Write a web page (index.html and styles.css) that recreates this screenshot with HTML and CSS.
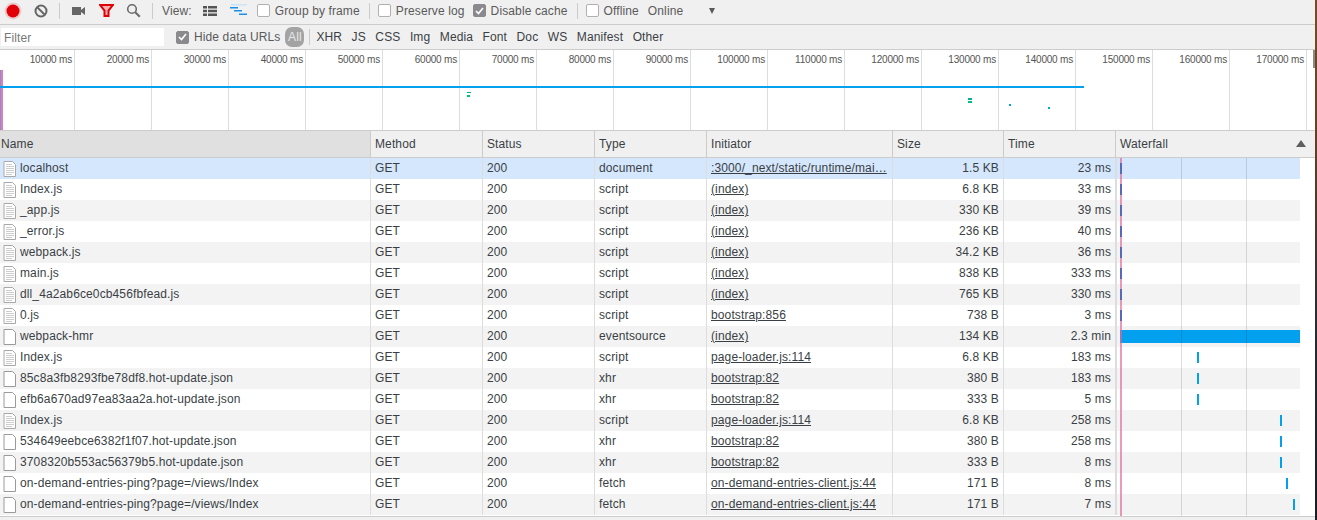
FILE: index.html
```html
<!DOCTYPE html>
<html lang="en">
<head>
<meta charset="utf-8">
<title>Network</title>
<link rel="stylesheet" href="styles.css">
</head>
<body>
<svg class="defs" aria-hidden="true">
  <symbol id="doc" viewBox="0 0 13 16"><path d="M1 .5h8.500l3 3v12h-11.500z" fill="#fff" stroke="#a8a8a8"/><path d="M3 3.500h6M3 5.500h8M3 7.500h8M3 9.500h8M3 11.500h8M3 13.500h6" stroke="#cdcdcd"/></symbol>
  <symbol id="blank" viewBox="0 0 13 16"><path d="M1 .5h8.500l3 3v12h-11.500z" fill="#fff" stroke="#9a9a9a"/></symbol>
</svg>
<div class="panel">
  <div class="toolbar">
    <svg class="ico rec" width="20" height="20" viewBox="0 0 20 20"><circle cx="10" cy="10" r="8.500" fill="#e8a0a0" opacity=".45"/><circle cx="10" cy="10" r="6.500" fill="#e00008"/></svg>
    <svg class="ico clear" width="16" height="16" viewBox="0 0 16 16"><circle cx="8" cy="8" r="5.500" fill="none" stroke="#666" stroke-width="2"/><path d="M4 4l8 8" stroke="#666" stroke-width="2"/></svg>
    <span class="sep sep-a"></span>
    <svg class="ico cam" width="13" height="8" viewBox="0 0 13 8"><path d="M0 0h9v8H0zM9 3l4-3v8L9 5z" fill="#666"/></svg>
    <svg class="ico funnel" width="15" height="13" viewBox="0 0 15 13"><path d="M1 1h13L9.500 6.500V12h-4V6.500z" fill="#f4b0b0" stroke="#e00008" stroke-width="2"/></svg>
    <svg class="ico search" width="15" height="15" viewBox="0 0 15 15"><circle cx="6" cy="6" r="4.300" fill="none" stroke="#6a6a6a" stroke-width="1.600"/><path d="M9.300 9.300l4.500 4.500" stroke="#6a6a6a" stroke-width="2"/></svg>
    <span class="sep sep-b"></span>
    <span class="label view-label">View:</span>
    <svg class="ico list" width="14" height="10" viewBox="0 0 14 10"><path d="M0 0h4v2.500H0zM5 0h9v2.500H5zM0 3.700h4v2.500H0zM5 3.700h9v2.500H5zM0 7.400h4V10H0zM5 7.400h9V10H5z" fill="#555"/></svg>
    <svg class="ico wf" width="17" height="12" viewBox="0 0 17 12"><path d="M1 0h16v1.500H1z" fill="#cfe3f8"/><path d="M0 3h8v1.500H0zM4 6h8v1.500H4zM9 9.500h8V11H9z" fill="#1a8fe8"/></svg>
    <label class="check check-group"><span class="box"></span>Group by frame</label>
    <span class="sep sep-c"></span>
    <label class="check check-log"><span class="box"></span>Preserve log</label>
    <label class="check check-cache"><span class="box on"><svg width="9" height="8" viewBox="0 0 9 8"><path d="M1 4l2.500 2.500L8 1" fill="none" stroke="#fff" stroke-width="1.600"/></svg></span>Disable cache</label>
    <span class="sep sep-d"></span>
    <label class="check check-offline"><span class="box"></span>Offline</label>
    <span class="label online">Online</span>
    <span class="caret"></span>
  </div>
  <div class="filterbar">
    <div class="filter-input">Filter</div>
    <label class="check check-hide"><span class="box on"><svg width="9" height="8" viewBox="0 0 9 8"><path d="M1 4l2.500 2.500L8 1" fill="none" stroke="#fff" stroke-width="1.600"/></svg></span>Hide data URLs</label>
    <span class="pill">All</span>
    <span class="sep sep-e"></span>
    <div class="types">
      <span>XHR</span><span>JS</span><span>CSS</span><span>Img</span><span>Media</span><span>Font</span><span>Doc</span><span>WS</span><span>Manifest</span><span>Other</span>
    </div>
  </div>
  <div class="overview">
    <div class="ticks">
      <div>10000 ms</div><div>20000 ms</div><div>30000 ms</div><div>40000 ms</div><div>50000 ms</div><div>60000 ms</div><div>70000 ms</div><div>80000 ms</div><div>90000 ms</div><div>100000 ms</div><div>110000 ms</div><div>120000 ms</div><div>130000 ms</div><div>140000 ms</div><div>150000 ms</div><div>160000 ms</div><div>170000 ms</div>
    </div>
    <i class="ov ov-blue"></i><i class="ov ov-pink"></i><i class="ov ov-line"></i>
    <i class="ov ov-g1"></i><i class="ov ov-g2"></i><i class="ov ov-g3"></i><i class="ov ov-g4"></i>
    <i class="ov ov-d1"></i><i class="ov ov-d2"></i>
    <i class="ov ov-thumb"></i>
  </div>
  <div class="grid head">
    <div class="c name-head">Name</div><div class="c">Method</div><div class="c">Status</div><div class="c">Type</div><div class="c">Initiator</div><div class="c">Size</div><div class="c">Time</div><div class="c wf-head">Waterfall<span class="sort"></span></div>
  </div>
  <div class="body">
    <div class="grid row selected"><div class="c n"><svg class="fi"><use href="#doc"/></svg>localhost</div><div class="c">GET</div><div class="c">200</div><div class="c">document</div><div class="c"><a>:3000/_next/static/runtime/mai…</a></div><div class="c r">1.5 KB</div><div class="c r">23 ms</div><div class="c w"><i class="load"></i></div></div>
    <div class="grid row"><div class="c n"><svg class="fi"><use href="#doc"/></svg>Index.js</div><div class="c">GET</div><div class="c">200</div><div class="c">script</div><div class="c"><a>(index)</a></div><div class="c r">6.8 KB</div><div class="c r">33 ms</div><div class="c w"><i class="load"></i></div></div>
    <div class="grid row"><div class="c n"><svg class="fi"><use href="#doc"/></svg>_app.js</div><div class="c">GET</div><div class="c">200</div><div class="c">script</div><div class="c"><a>(index)</a></div><div class="c r">330 KB</div><div class="c r">39 ms</div><div class="c w"><i class="load"></i></div></div>
    <div class="grid row"><div class="c n"><svg class="fi"><use href="#doc"/></svg>_error.js</div><div class="c">GET</div><div class="c">200</div><div class="c">script</div><div class="c"><a>(index)</a></div><div class="c r">236 KB</div><div class="c r">40 ms</div><div class="c w"><i class="load"></i></div></div>
    <div class="grid row"><div class="c n"><svg class="fi"><use href="#doc"/></svg>webpack.js</div><div class="c">GET</div><div class="c">200</div><div class="c">script</div><div class="c"><a>(index)</a></div><div class="c r">34.2 KB</div><div class="c r">36 ms</div><div class="c w"><i class="load"></i></div></div>
    <div class="grid row"><div class="c n"><svg class="fi"><use href="#doc"/></svg>main.js</div><div class="c">GET</div><div class="c">200</div><div class="c">script</div><div class="c"><a>(index)</a></div><div class="c r">838 KB</div><div class="c r">333 ms</div><div class="c w"><i class="load"></i></div></div>
    <div class="grid row"><div class="c n"><svg class="fi"><use href="#doc"/></svg>dll_4a2ab6ce0cb456fbfead.js</div><div class="c">GET</div><div class="c">200</div><div class="c">script</div><div class="c"><a>(index)</a></div><div class="c r">765 KB</div><div class="c r">330 ms</div><div class="c w"><i class="load"></i></div></div>
    <div class="grid row"><div class="c n"><svg class="fi"><use href="#doc"/></svg>0.js</div><div class="c">GET</div><div class="c">200</div><div class="c">script</div><div class="c"><a>bootstrap:856</a></div><div class="c r">738 B</div><div class="c r">3 ms</div><div class="c w"><i class="load"></i></div></div>
    <div class="grid row"><div class="c n"><svg class="fi"><use href="#blank"/></svg>webpack-hmr</div><div class="c">GET</div><div class="c">200</div><div class="c">eventsource</div><div class="c"><a>(index)</a></div><div class="c r">134 KB</div><div class="c r">2.3 min</div><div class="c w"><i class="long"></i></div></div>
    <div class="grid row"><div class="c n"><svg class="fi"><use href="#doc"/></svg>Index.js</div><div class="c">GET</div><div class="c">200</div><div class="c">script</div><div class="c"><a>page-loader.js:114</a></div><div class="c r">6.8 KB</div><div class="c r">183 ms</div><div class="c w"><i class="tick" style="left:80px"></i></div></div>
    <div class="grid row"><div class="c n"><svg class="fi"><use href="#blank"/></svg>85c8a3fb8293fbe78df8.hot-update.json</div><div class="c">GET</div><div class="c">200</div><div class="c">xhr</div><div class="c"><a>bootstrap:82</a></div><div class="c r">380 B</div><div class="c r">183 ms</div><div class="c w"><i class="tick" style="left:80px"></i></div></div>
    <div class="grid row"><div class="c n"><svg class="fi"><use href="#blank"/></svg>efb6a670ad97ea83aa2a.hot-update.json</div><div class="c">GET</div><div class="c">200</div><div class="c">xhr</div><div class="c"><a>bootstrap:82</a></div><div class="c r">333 B</div><div class="c r">5 ms</div><div class="c w"><i class="tick" style="left:80px"></i></div></div>
    <div class="grid row"><div class="c n"><svg class="fi"><use href="#doc"/></svg>Index.js</div><div class="c">GET</div><div class="c">200</div><div class="c">script</div><div class="c"><a>page-loader.js:114</a></div><div class="c r">6.8 KB</div><div class="c r">258 ms</div><div class="c w"><i class="tick" style="left:163px"></i></div></div>
    <div class="grid row"><div class="c n"><svg class="fi"><use href="#blank"/></svg>534649eebce6382f1f07.hot-update.json</div><div class="c">GET</div><div class="c">200</div><div class="c">xhr</div><div class="c"><a>bootstrap:82</a></div><div class="c r">380 B</div><div class="c r">258 ms</div><div class="c w"><i class="tick" style="left:163px"></i></div></div>
    <div class="grid row"><div class="c n"><svg class="fi"><use href="#blank"/></svg>3708320b553ac56379b5.hot-update.json</div><div class="c">GET</div><div class="c">200</div><div class="c">xhr</div><div class="c"><a>bootstrap:82</a></div><div class="c r">333 B</div><div class="c r">8 ms</div><div class="c w"><i class="tick" style="left:163px"></i></div></div>
    <div class="grid row"><div class="c n"><svg class="fi"><use href="#blank"/></svg>on-demand-entries-ping?page=/views/Index</div><div class="c">GET</div><div class="c">200</div><div class="c">fetch</div><div class="c"><a>on-demand-entries-client.js:44</a></div><div class="c r">171 B</div><div class="c r">8 ms</div><div class="c w"><i class="tick" style="left:169px"></i></div></div>
    <div class="grid row"><div class="c n"><svg class="fi"><use href="#blank"/></svg>on-demand-entries-ping?page=/views/Index</div><div class="c">GET</div><div class="c">200</div><div class="c">fetch</div><div class="c"><a>on-demand-entries-client.js:44</a></div><div class="c r">171 B</div><div class="c r">7 ms</div><div class="c w"><i class="tick" style="left:176px"></i></div></div>
    <i class="wline wline-1"></i><i class="wline wline-2"></i><i class="wline wline-pink"></i>
  </div>
  <div class="footer"></div>
</div>
<div class="edge"></div>
</body>
</html>
```
FILE: styles.css
```css
* { box-sizing: border-box; }
html, body { margin: 0; height: 520px; overflow: hidden; }
body {
  display: flex;
  font: 12px "Liberation Sans", Arial, sans-serif;
  letter-spacing: .12px;
  color: #3a3f45;
  background: #fff;
}
.defs { display: none; }
.panel { width: 1315px; height: 520px; display: flex; flex-direction: column; flex: none; }
.edge { flex: 1; background: linear-gradient(#7a4a28 0, #6b3f22 130px, #2a2a35 330px, #1c1c28 100%); }

.toolbar, .filterbar {
  display: flex;
  align-items: center;
  background: #f0f0f0;
  color: #5a5a5a;
  flex: none;
}
.toolbar { height: 25px; padding-bottom: 3px; border-bottom: 1px solid #ccc; }
.filterbar { height: 25px; border-bottom: 1px solid #ccc; }
.ico { flex: none; display: block; }
.rec { margin-left: 3px; }
.clear { margin-left: 10px; }
.sep { width: 1px; height: 16px; background: #ccc; flex: none; }
.sep-a { margin-left: 10px; }
.cam { margin-left: 12px; }
.funnel { margin-left: 14px; }
.search { margin-left: 12px; }
.sep-b { margin-left: 11px; }
.view-label { margin-left: 9px; }
.list { margin-left: 11px; }
.wf { margin-left: 13px; margin-top: -1px; }
.check { display: flex; align-items: center; flex: none; }
.box {
  width: 13px; height: 13px; border: 1px solid #b0b0b0; border-radius: 2px;
  background: #fff; margin-right: 5px; flex: none;
  display: flex; align-items: center; justify-content: center;
}
.box.on { background: #8a8a8e; border-color: #8a8a8e; }
.check-group { margin-left: 10px; }
.sep-c { margin-left: 9px; }
.check-log { margin-left: 8px; }
.check-cache { margin-left: 8px; }
.sep-d { margin-left: 9px; }
.check-offline { margin-left: 8px; }
.online { margin-left: 9px; }
.caret {
  margin-left: 26px; width: 0; height: 0;
  border-left: 3.500px solid transparent; border-right: 3.500px solid transparent;
  border-top: 6px solid #5a5a5a;
}

.filter-input {
  margin-left: 1px; width: 163px; height: 18px; background: #fff;
  color: #777; padding: 3px 3px 0; line-height: 14px;
}
.check-hide { margin-left: 12px; }
.pill {
  margin-left: 5px; width: 19px; height: 20px; border-radius: 7px;
  background: #a3a3a3; color: #e8e8e8; text-align: center; line-height: 20px;
}
.sep-e { margin-left: 5px; }
.types { display: flex; gap: 9.500px; margin-left: 6px; color: #3a3f45; }

.overview { height: 81px; flex: none; position: relative; background: #fff; border-bottom: 1px solid #ccc; overflow: hidden; }
.ticks { display: flex; height: 100%; margin-left: -2px; }
.ticks div {
  width: 77px; flex: none; text-align: right; padding: 4px 2px 0 0;
  border-right: 1px solid #ddd; color: #555; font-size: 10px; letter-spacing: -.2px; line-height: 12px;
}
.ov { position: absolute; display: block; }
.ov-blue { left: 0; top: 20px; width: 1px; height: 60px; background: #7d8ff0; }
.ov-pink { left: 1px; top: 20px; width: 2px; height: 60px; background: #f07a9a; }
.ov-line { left: 0; top: 36px; width: 1084px; height: 2px; background: #03a0ef; }
.ov-g1 { left: 467px; top: 42px; width: 4px; height: 1px; background: #00b09a; }
.ov-g2 { left: 467px; top: 45px; width: 3px; height: 2px; background: #00c080; }
.ov-g3 { left: 968px; top: 48px; width: 4px; height: 2px; background: #00b09a; }
.ov-g4 { left: 968px; top: 51px; width: 4px; height: 2px; background: #00c080; }
.ov-d1 { left: 1009px; top: 54px; width: 2px; height: 2px; background: #00a8c0; }
.ov-d2 { left: 1048px; top: 57px; width: 2px; height: 2px; background: #00a8c0; }
.ov-thumb { left: 1313px; top: 0; width: 2px; height: 18px; background: #8a8a8a; }

.grid { display: grid; grid-template-columns: 371px 112px 112px 112px 186px 111px 112px 1fr; }
.c { padding: 0 4px; white-space: nowrap; overflow: hidden; border-right: 1px solid #ddd; }
.head { height: 27px; flex: none; background: #f0f0f0; border-bottom: 1px solid #ccc; line-height: 26px; }
.head .c { border-right-color: #ccc; }
.name-head { background: #e0e0e0; padding-left: 1px; }
.wf-head { position: relative; border-right: 0; }
.sort {
  position: absolute; left: 180px; top: 9px; width: 0; height: 0;
  border-left: 5px solid transparent; border-right: 5px solid transparent;
  border-bottom: 7px solid #5f5f5f;
}

.body { position: relative; flex: 1; background: #fff; }
.row { width: 1300px; height: 21px; line-height: 20px; }
.row:nth-child(even) { background: #fff; }
.row:nth-child(odd) { background: #f3f3f3; }
.row.selected { background: #d5e7fd; }
.n { display: flex; align-items: flex-start; padding-left: 3px; }
.fi { width: 13px; height: 16px; margin: 3px 4px 0 0; flex: none; }
.r { text-align: right; }
a { color: #3a3f45; text-decoration: underline; }
.w { position: relative; border-right: 0; border-left: 1px solid #ddd; padding: 0; overflow: visible; }
.load { position: absolute; left: 3px; top: 5px; width: 2px; height: 11px; background: #5a68b8; z-index: 2; }
.long { position: absolute; left: 3px; top: 4px; right: 0; height: 13px; background: #03a0ef; }
.tick { position: absolute; top: 5px; width: 2px; height: 11px; background: #03a0ef; }
.wline { position: absolute; top: 0; bottom: 0; width: 1px; background: rgba(0,0,0,.13); }
.wline-1 { left: 1181px; }
.wline-2 { left: 1246px; }
.wline-pink { left: 1120px; width: 2px; background: rgba(222,100,150,.65); }

.footer { height: 4px; flex: none; background: #f0f0f0; border-top: 1px solid #ccc; }
```
